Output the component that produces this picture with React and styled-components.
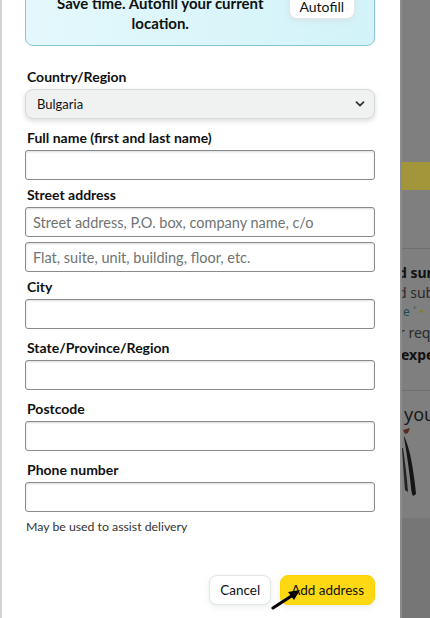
import React from "react";
import styled, { createGlobalStyle } from "styled-components";

const Global = createGlobalStyle`
  html, body { margin: 0; padding: 0; }
  body { font-family: Lato, "Noto Sans", Arial, sans-serif; color: #0f1111; background: #7f7f7f; }
  * { box-sizing: border-box; }
`;

const Page = styled.div`
  display: flex;
  width: 430px;
  height: 618px;
  overflow: hidden;
`;

const Modal = styled.div`
  width: 400px;
  flex: none;
  background: #fff;
  border-left: 2px solid #d3d3d3;
  padding: 0 25px 0 23px;
  display: flex;
  flex-direction: column;
`;

const Banner = styled.div`
  margin-top: -22px;
  border: 1px solid #86c6cf;
  border-radius: 8px;
  background: linear-gradient(to right, #e4f8fb, #d2f3f9);
  padding: 14px 19px 12px 16px;
  display: flex;
  align-items: flex-start;
  gap: 10px;
`;

const BannerText = styled.div`
  flex: 1;
  text-align: center;
  font-weight: 700;
  font-size: 15px;
  line-height: 20px;
`;

const WhiteButton = styled.button`
  font-family: inherit;
  font-size: ${(p) => p.$fs || 13.5}px;
  color: #0f1111;
  background: #fff;
  border: 1px solid #e3e6e6;
  border-radius: 8px;
  box-shadow: 0 2px 5px rgba(213, 217, 217, 0.5);
  height: ${(p) => p.$h || 30}px;
  padding: 0 ${(p) => p.$px || 11}px;
  cursor: pointer;
`;

const Field = styled.div`
  display: flex;
  flex-direction: column;
  gap: ${(p) => p.$inner || 0}px;
  margin-top: ${(p) => p.$top || 0}px;
`;

const Label = styled.label`
  font-weight: 700;
  font-size: 14px;
  line-height: 20px;
  padding-left: 2px;
  margin-bottom: ${(p) => (p.$mb !== undefined ? p.$mb : 2)}px;
`;

const SelectBox = styled.div`
  height: 30px;
  border: 1px solid #d5d9d9;
  border-radius: 8px;
  background: #f0f2f2;
  box-shadow: 0 2px 5px rgba(15, 17, 17, 0.15);
  display: flex;
  align-items: center;
  justify-content: space-between;
  padding: 0 8px 0 11px;
  font-size: 13px;
`;

const Input = styled.input`
  height: 30px;
  width: 100%;
  border: 1px solid #888c8c;
  border-radius: 3px;
  box-shadow: inset 0 1px 2px rgba(15, 17, 17, 0.15);
  padding: 0 7px;
  font-family: inherit;
  font-size: 14.5px;
  color: #0f1111;
  outline: none;
  &::placeholder { color: #6f7373; }
`;

const Helper = styled.div`
  font-size: 12.3px;
  line-height: 16px;
  margin-top: 7px;
  padding-left: 1px;
  color: #333;
`;

const Footer = styled.div`
  position: relative;
  margin-top: 40px;
  display: flex;
  justify-content: flex-end;
  gap: 9px;
`;

const PrimaryButton = styled.button`
  font-family: inherit;
  font-size: 13.5px;
  color: #0f1111;
  background: #ffd814;
  border: 1px solid #fcd200;
  border-radius: 8px;
  box-shadow: 0 2px 5px rgba(213, 217, 217, 0.5);
  height: 30px;
  padding: 0 10px;
  cursor: pointer;
`;

const Cursor = styled.svg`
  position: absolute;
  left: 246px;
  top: 12px;
`;

const Backdrop = styled.div`
  flex: 1;
  display: flex;
  flex-direction: column;
  background: #7f7f7f;
  overflow: hidden;
  border-left: 2px solid #8c8c8c;
`;

const Band = styled.div`
  height: ${(p) => p.$h}px;
  flex: none;
  background: ${(p) => p.$bg || "transparent"};
  border-bottom: ${(p) => (p.$line ? "1px solid #6e6e6e" : "none")};
`;

const BgText = styled.div`
  white-space: nowrap;
  margin-left: ${(p) => p.$shift || -6}px;
  font-size: ${(p) => p.$size || 14}px;
  line-height: ${(p) => p.$lh || 20}px;
  font-weight: ${(p) => (p.$bold ? 700 : 400)};
  color: ${(p) => p.$color || "#111"};
  font-family: "Noto Sans", sans-serif;
`;

const TextBlock = styled.div`
  padding-top: 14px;
  height: 142px;
  flex: none;
  border-bottom: 1px solid #6e6e6e;
  display: flex;
  flex-direction: column;
`;

const LowerBlock = styled.div`
  padding-top: 11px;
  height: 127px;
  flex: none;
`;

const Figure = styled.svg`
  display: block;
  margin-top: 2px;
  filter: blur(0.6px);
`;

const Chevron = () => (
  <svg width="12" height="12" viewBox="0 0 12 12">
    <path d="M2.5 4.2 L6 7.6 L9.5 4.2" fill="none" stroke="#333" strokeWidth="1.8" strokeLinecap="round" strokeLinejoin="round" />
  </svg>
);

export default function App() {
  return (
    <>
      <Global />
      <Page>
        <Modal>
          <Banner>
            <BannerText>Save time. Autofill your current location.</BannerText>
            <WhiteButton $h={26} $px={10} $fs={14}>Autofill</WhiteButton>
          </Banner>

          <Field $top={21}>
            <Label>Country/Region</Label>
            <SelectBox>
              <span>Bulgaria</span>
              <Chevron />
            </SelectBox>
          </Field>

          <Field $top={9}>
            <Label>Full name (first and last name)</Label>
            <Input />
          </Field>

          <Field $top={5} $inner={5}>
            <Label $mb={-3}>Street address</Label>
            <Input placeholder="Street address, P.O. box, company name, c/o" />
            <Input placeholder="Flat, suite, unit, building, floor, etc." />
          </Field>

          <Field $top={5}>
            <Label>City</Label>
            <Input />
          </Field>

          <Field $top={9}>
            <Label>State/Province/Region</Label>
            <Input />
          </Field>

          <Field $top={9}>
            <Label>Postcode</Label>
            <Input />
          </Field>

          <Field $top={9}>
            <Label>Phone number</Label>
            <Input />
          </Field>

          <Helper>May be used to assist delivery</Helper>

          <Footer>
            <WhiteButton $px={10}>Cancel</WhiteButton>
            <PrimaryButton>Add address</PrimaryButton>
            <Cursor width="32" height="24" viewBox="0 0 32 24">
              <path d="M2 21 L22 8" stroke="#000" strokeWidth="3.2" strokeLinecap="round" />
              <path d="M29 3 L17 5 L23 13 Z" fill="#000" />
            </Cursor>
          </Footer>
        </Modal>

        <Backdrop>
          <Band $h={162} />
          <Band $h={28} $bg="#a2953a" />
          <Band $h={59} $line />
          <TextBlock>
            <BgText $bold $shift={-4}>d summary</BgText>
            <BgText $color="#2a2a2a" $shift={-4}>d subtotal</BgText>
            <BgText $size={12} $lh={18} $color="#1f4d55" $shift={1}>e ˅ <span style={{ color: "#8a7a20" }}>•</span></BgText>
            <BgText $color="#2a2a2a" $lh={24} $shift={-3}>r request</BgText>
            <BgText $bold $shift={-1}>expected</BgText>
          </TextBlock>
          <LowerBlock>
            <BgText $size={18} $lh={24} $shift={2} $color="#1a1a1a">you</BgText>
            <Figure width="28" height="70" viewBox="0 0 28 70">
              <path d="M1 2 L8 0 L6 5 L3 6 Z" fill="#5a2a20" />
              <path d="M2 10 C4 20 6 35 8 50 C9 58 9 64 11 68 L14 66 C13 55 11 40 8 26 C6 18 4 12 2 8 Z" fill="#151515" />
              <path d="M0 20 C1 35 2 50 3 62 L6 64 C5 50 3 34 1 20 Z" fill="#222" />
            </Figure>
          </LowerBlock>
          <Band $h={200} $bg="#767676" />
        </Backdrop>
      </Page>
    </>
  );
}
